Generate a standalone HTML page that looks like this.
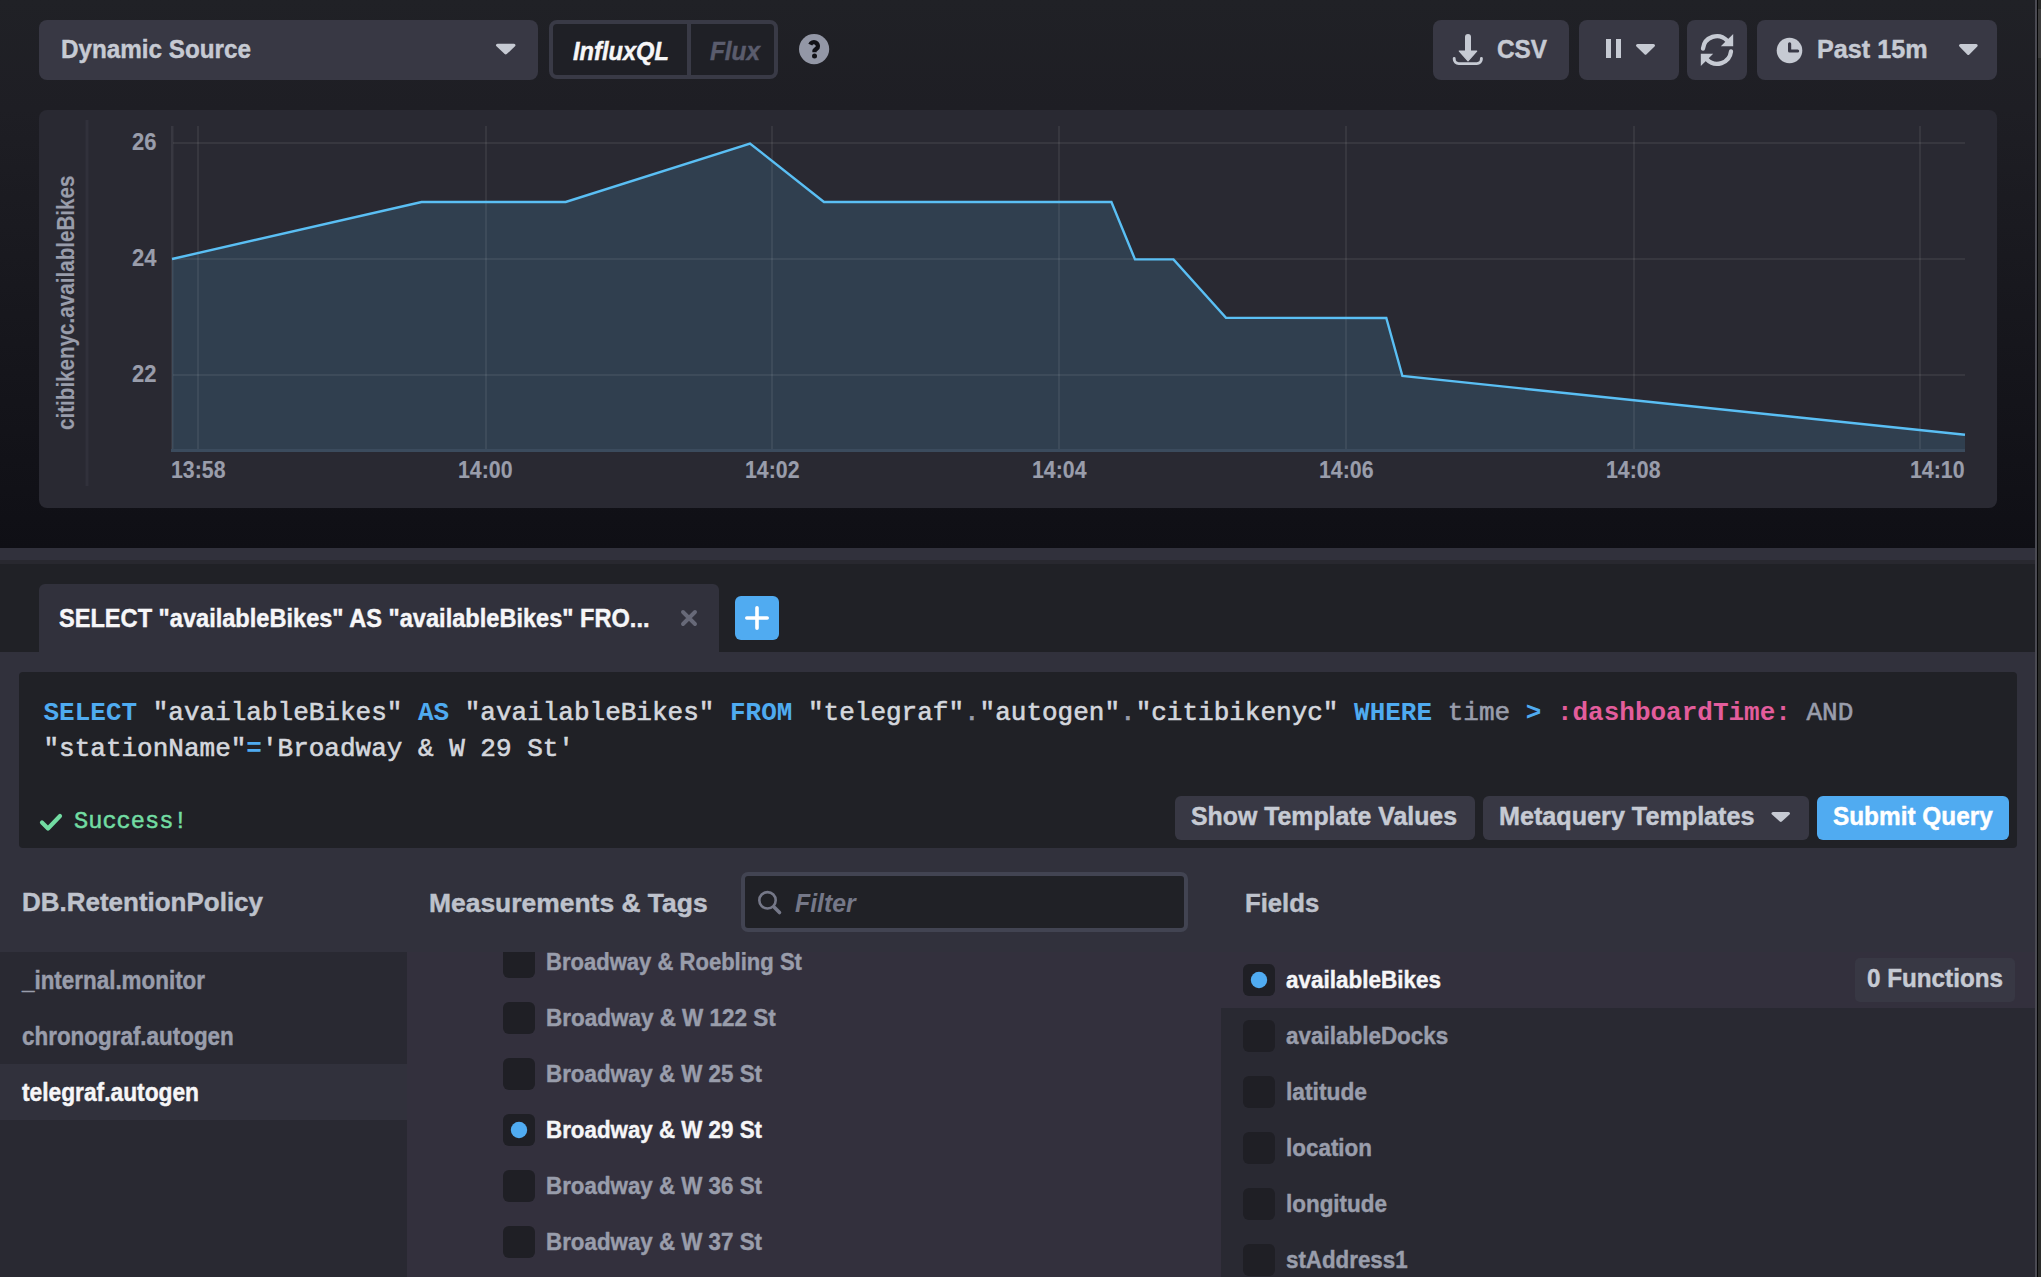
<!DOCTYPE html>
<html><head><meta charset="utf-8"><title>Chronograf Data Explorer</title>
<style>
html,body{margin:0;padding:0;width:2041px;height:1277px;overflow:hidden;background:#202126;}
.b{position:absolute;}
.t{position:absolute;white-space:pre;transform-origin:0 0;}
</style></head><body>
<div class="b" style="left:0;top:0;width:2041px;height:548px;background:linear-gradient(to bottom,#202126 0%,#1e1e24 20%,#0f0f15 100%)"></div>
<div class="b" style="left:39px;top:20px;width:499px;height:60px;background:#383844;border-radius:8px;"></div>
<div class="t" style="left:60.80px;top:35.97px;font-size:26.50px;line-height:26.50px;font-family:'Liberation Sans',sans-serif;font-weight:700;font-style:normal;color:#c6cad3;transform:scaleX(0.9149);-webkit-text-stroke:0.45px #c6cad3;">Dynamic Source</div>
<svg class="b" style="left:490px;top:40px" width="30" height="20" viewBox="0 0 30 20"><path d="M7.5 5.2 L24 5.2 L15.7 13 Z" fill="#c6cad3" stroke="#c6cad3" stroke-width="3" stroke-linejoin="round"/></svg>
<div class="b" style="left:549px;top:20px;width:229px;height:59px;background:#1f2026;border-radius:8px;box-sizing:border-box;border:4px solid #393a46;"></div>
<div class="b" style="left:687px;top:24px;width:4px;height:51px;background:#393a46;"></div>
<div class="t" style="left:573.00px;top:37.99px;font-size:26.00px;line-height:26.00px;font-family:'Liberation Sans',sans-serif;font-weight:700;font-style:italic;color:#f6f6f8;transform:scaleX(0.9105);-webkit-text-stroke:0.45px #f6f6f8;">InfluxQL</div>
<div class="t" style="left:710.00px;top:37.99px;font-size:26.00px;line-height:26.00px;font-family:'Liberation Sans',sans-serif;font-weight:700;font-style:italic;color:#5a5c6d;transform:scaleX(0.9355);-webkit-text-stroke:0.45px #5a5c6d;">Flux</div>
<svg class="b" style="left:797px;top:32px" width="34" height="34" viewBox="0 0 34 34"><circle cx="17.1" cy="17.1" r="15.1" fill="#9397a6"/><path d="M13.3 12.6 A3.9 3.9 0 1 1 20.6 15.6 L17.5 18.6 L17.5 20.2" fill="none" stroke="#111116" stroke-width="4.3" stroke-linejoin="round"/><circle cx="17.5" cy="24" r="2.5" fill="#111116"/></svg>
<div class="b" style="left:1433px;top:20px;width:136px;height:60px;background:#383844;border-radius:8px;"></div>
<svg class="b" style="left:1450px;top:30px" width="40" height="40" viewBox="0 0 40 40"><path d="M18 7 L18 22" stroke="#c6cad3" stroke-width="6" stroke-linecap="round"/><path d="M9.3 21 L26.7 21 L18 30.8 Z" fill="#c6cad3" stroke="#c6cad3" stroke-width="1.2" stroke-linejoin="round"/><path d="M4.2 28.5 L4.2 29.1 A4.5 4.5 0 0 0 8.7 33.6 L26.9 33.6 A4.5 4.5 0 0 0 31.4 29.1 L31.4 28.5" fill="none" stroke="#c6cad3" stroke-width="2.9" stroke-linecap="round"/></svg>
<div class="t" style="left:1497.00px;top:35.99px;font-size:26.00px;line-height:26.00px;font-family:'Liberation Sans',sans-serif;font-weight:700;font-style:normal;color:#c6cad3;transform:scaleX(0.9352);-webkit-text-stroke:0.45px #c6cad3;">CSV</div>
<div class="b" style="left:1579px;top:20px;width:100px;height:60px;background:#383844;border-radius:8px;"></div>
<div class="b" style="left:1605.5px;top:39px;width:5.5px;height:19px;background:#c6cad3;"></div>
<div class="b" style="left:1615.5px;top:39px;width:5.5px;height:19px;background:#c6cad3;"></div>
<svg class="b" style="left:1630px;top:40px" width="30" height="20" viewBox="0 0 30 20"><path d="M7.5 5.5 L23.5 5.5 L15.5 13.2 Z" fill="#c6cad3" stroke="#c6cad3" stroke-width="3" stroke-linejoin="round"/></svg>
<div class="b" style="left:1687px;top:20px;width:60px;height:60px;background:#383844;border-radius:8px;"></div>
<svg class="b" style="left:1697px;top:30px" width="40" height="40" viewBox="0 0 40 40"><path d="M6 18.5 A14 14 0 0 1 30 10.5" fill="none" stroke="#c6cad3" stroke-width="4.3" stroke-linecap="round"/><path d="M36.2 4 L36.2 16.3 L23.8 16.3 Z" fill="#c6cad3"/><path d="M34 21.5 A14 14 0 0 1 10 29.5" fill="none" stroke="#c6cad3" stroke-width="4.3" stroke-linecap="round"/><path d="M3.8 36 L3.8 23.7 L16.2 23.7 Z" fill="#c6cad3"/></svg>
<div class="b" style="left:1757px;top:20px;width:240px;height:60px;background:#383844;border-radius:8px;"></div>
<svg class="b" style="left:1774px;top:35px" width="32" height="32" viewBox="0 0 32 32"><circle cx="15.5" cy="15.5" r="12.8" fill="#c6cad3"/><path d="M15.6 8.8 L15.6 16 L23.6 16" fill="none" stroke="#383846" stroke-width="3.2" stroke-linecap="round" stroke-linejoin="round"/></svg>
<div class="t" style="left:1816.70px;top:35.99px;font-size:26.00px;line-height:26.00px;font-family:'Liberation Sans',sans-serif;font-weight:700;font-style:normal;color:#c6cad3;transform:scaleX(0.9686);-webkit-text-stroke:0.45px #c6cad3;">Past 15m</div>
<svg class="b" style="left:1952px;top:40px" width="30" height="20" viewBox="0 0 30 20"><path d="M8.5 5.5 L24.2 5.5 L16.3 13.5 Z" fill="#c6cad3" stroke="#c6cad3" stroke-width="3" stroke-linejoin="round"/></svg>
<div class="b" style="left:39px;top:110px;width:1958px;height:398px;background:#292932;border-radius:8px;"></div>
<svg class="b" style="left:0;top:0" width="2041" height="548" viewBox="0 0 2041 548"><rect x="85.5" y="120" width="3" height="366" fill="#31313b"/><polygon points="172,259 421.6,202 565.7,202 750,143.5 824,202 1111.4,202 1135,259.4 1173.5,259.4 1226,317.8 1386.3,318 1402.4,376 1965,434.8 1965,450 172,450" fill="#303f4f"/><rect x="173" y="142" width="1792" height="2" fill="rgba(255,255,255,0.065)"/><rect x="173" y="258" width="1792" height="2" fill="rgba(255,255,255,0.065)"/><rect x="173" y="374" width="1792" height="2" fill="rgba(255,255,255,0.065)"/><rect x="197" y="126" width="2" height="324" fill="rgba(255,255,255,0.065)"/><rect x="485" y="126" width="2" height="324" fill="rgba(255,255,255,0.065)"/><rect x="771" y="126" width="2" height="324" fill="rgba(255,255,255,0.065)"/><rect x="1058" y="126" width="2" height="324" fill="rgba(255,255,255,0.065)"/><rect x="1345" y="126" width="2" height="324" fill="rgba(255,255,255,0.065)"/><rect x="1633" y="126" width="2" height="324" fill="rgba(255,255,255,0.065)"/><rect x="1919" y="126" width="2" height="324" fill="rgba(255,255,255,0.065)"/><rect x="171" y="126" width="2.5" height="324" fill="rgba(255,255,255,0.075)"/><rect x="171" y="449" width="1794" height="3" fill="#3b4b5d"/><polyline points="172,259 421.6,202 565.7,202 750,143.5 824,202 1111.4,202 1135,259.4 1173.5,259.4 1226,317.8 1386.3,318 1402.4,376 1965,434.8" fill="none" stroke="#5abff4" stroke-width="2.4" stroke-linejoin="miter"/></svg>
<div class="t" style="left:132.00px;top:130.86px;font-size:23.20px;line-height:23.20px;font-family:'Liberation Sans',sans-serif;font-weight:700;font-style:normal;color:#999dab;transform:scaleX(0.9494);-webkit-text-stroke:0.15px #999dab;">26</div>
<div class="t" style="left:132.00px;top:246.86px;font-size:23.20px;line-height:23.20px;font-family:'Liberation Sans',sans-serif;font-weight:700;font-style:normal;color:#999dab;transform:scaleX(0.9494);-webkit-text-stroke:0.15px #999dab;">24</div>
<div class="t" style="left:132.00px;top:362.86px;font-size:23.20px;line-height:23.20px;font-family:'Liberation Sans',sans-serif;font-weight:700;font-style:normal;color:#999dab;transform:scaleX(0.9494);-webkit-text-stroke:0.15px #999dab;">22</div>
<div class="t" style="left:170.75px;top:458.83px;font-size:23.00px;line-height:23.00px;font-family:'Liberation Sans',sans-serif;font-weight:700;font-style:normal;color:#999dab;transform:scaleX(0.9264);-webkit-text-stroke:0.15px #999dab;">13:58</div>
<div class="t" style="left:457.75px;top:458.83px;font-size:23.00px;line-height:23.00px;font-family:'Liberation Sans',sans-serif;font-weight:700;font-style:normal;color:#999dab;transform:scaleX(0.9264);-webkit-text-stroke:0.15px #999dab;">14:00</div>
<div class="t" style="left:744.75px;top:458.83px;font-size:23.00px;line-height:23.00px;font-family:'Liberation Sans',sans-serif;font-weight:700;font-style:normal;color:#999dab;transform:scaleX(0.9264);-webkit-text-stroke:0.15px #999dab;">14:02</div>
<div class="t" style="left:1031.75px;top:458.83px;font-size:23.00px;line-height:23.00px;font-family:'Liberation Sans',sans-serif;font-weight:700;font-style:normal;color:#999dab;transform:scaleX(0.9264);-webkit-text-stroke:0.15px #999dab;">14:04</div>
<div class="t" style="left:1318.75px;top:458.83px;font-size:23.00px;line-height:23.00px;font-family:'Liberation Sans',sans-serif;font-weight:700;font-style:normal;color:#999dab;transform:scaleX(0.9264);-webkit-text-stroke:0.15px #999dab;">14:06</div>
<div class="t" style="left:1605.75px;top:458.83px;font-size:23.00px;line-height:23.00px;font-family:'Liberation Sans',sans-serif;font-weight:700;font-style:normal;color:#999dab;transform:scaleX(0.9264);-webkit-text-stroke:0.15px #999dab;">14:08</div>
<div class="t" style="left:1910.00px;top:458.83px;font-size:23.00px;line-height:23.00px;font-family:'Liberation Sans',sans-serif;font-weight:700;font-style:normal;color:#999dab;transform:scaleX(0.9264);-webkit-text-stroke:0.15px #999dab;">14:10</div>
<div class="b" style="left:75.2px;top:430px;width:0;height:0;transform:rotate(-90deg);transform-origin:0 0"><div class="t" style="left:0.00px;top:-19.64px;font-size:23.20px;line-height:23.20px;font-family:'Liberation Sans',sans-serif;font-weight:700;font-style:normal;color:#999dab;transform:scaleX(0.8893);-webkit-text-stroke:0.15px #999dab;">citibikenyc.availableBikes</div></div>
<div class="b" style="left:0px;top:548px;width:2041px;height:12px;background:#31313c;"></div>
<div class="b" style="left:0px;top:560px;width:2041px;height:4px;background:#28282f;"></div>
<div class="b" style="left:0px;top:564px;width:2041px;height:713px;background:#202126;"></div>
<div class="b" style="left:39px;top:584px;width:680px;height:80px;background:#31313c;border-radius:6px 6px 0 0;"></div>
<div class="t" style="left:59.40px;top:606.16px;font-size:25.80px;line-height:25.80px;font-family:'Liberation Sans',sans-serif;font-weight:700;font-style:normal;color:#f6f6f8;transform:scaleX(0.9143);-webkit-text-stroke:0.45px #f6f6f8;">SELECT &quot;availableBikes&quot; AS &quot;availableBikes&quot; FRO...</div>
<svg class="b" style="left:676px;top:605px" width="26" height="26" viewBox="0 0 26 26"><path d="M7 7 L19 19 M19 7 L7 19" stroke="#676978" stroke-width="3.9" stroke-linecap="round"/></svg>
<div class="b" style="left:735px;top:596px;width:44px;height:44px;background:#50abf1;border-radius:6px;"></div>
<svg class="b" style="left:735px;top:596px" width="44" height="44" viewBox="0 0 44 44"><path d="M22 11.8 L22 32.2 M11.8 22 L32.2 22" stroke="#ffffff" stroke-width="3.6" stroke-linecap="round"/></svg>
<div class="b" style="left:0px;top:652px;width:2035px;height:625px;background:#31313c;"></div>
<div class="b" style="left:19px;top:672px;width:1998px;height:176px;background:#202126;border-radius:4px;"></div>
<div class="t" style="left:43.50px;top:700.07px;font-size:26.00px;line-height:26.00px;font-family:'Liberation Mono',monospace;font-weight:700;font-style:normal;color:#4fabf0;">SELECT</div><div class="t" style="left:137.11px;top:700.07px;font-size:26.00px;line-height:26.00px;font-family:'Liberation Mono',monospace;font-weight:400;font-style:normal;color:#d4d7dd;-webkit-text-stroke:0.6px #d4d7dd;"> &quot;availableBikes&quot; </div><div class="t" style="left:417.95px;top:700.07px;font-size:26.00px;line-height:26.00px;font-family:'Liberation Mono',monospace;font-weight:700;font-style:normal;color:#4fabf0;">AS</div><div class="t" style="left:449.15px;top:700.07px;font-size:26.00px;line-height:26.00px;font-family:'Liberation Mono',monospace;font-weight:400;font-style:normal;color:#d4d7dd;-webkit-text-stroke:0.6px #d4d7dd;"> &quot;availableBikes&quot; </div><div class="t" style="left:729.99px;top:700.07px;font-size:26.00px;line-height:26.00px;font-family:'Liberation Mono',monospace;font-weight:700;font-style:normal;color:#4fabf0;">FROM</div><div class="t" style="left:792.40px;top:700.07px;font-size:26.00px;line-height:26.00px;font-family:'Liberation Mono',monospace;font-weight:400;font-style:normal;color:#d4d7dd;-webkit-text-stroke:0.6px #d4d7dd;"> &quot;telegraf&quot;</div><div class="t" style="left:964.02px;top:700.07px;font-size:26.00px;line-height:26.00px;font-family:'Liberation Mono',monospace;font-weight:400;font-style:normal;color:#999dab;-webkit-text-stroke:0.6px #999dab;">.</div><div class="t" style="left:979.62px;top:700.07px;font-size:26.00px;line-height:26.00px;font-family:'Liberation Mono',monospace;font-weight:400;font-style:normal;color:#d4d7dd;-webkit-text-stroke:0.6px #d4d7dd;">&quot;autogen&quot;</div><div class="t" style="left:1120.04px;top:700.07px;font-size:26.00px;line-height:26.00px;font-family:'Liberation Mono',monospace;font-weight:400;font-style:normal;color:#999dab;-webkit-text-stroke:0.6px #999dab;">.</div><div class="t" style="left:1135.64px;top:700.07px;font-size:26.00px;line-height:26.00px;font-family:'Liberation Mono',monospace;font-weight:400;font-style:normal;color:#d4d7dd;-webkit-text-stroke:0.6px #d4d7dd;">&quot;citibikenyc&quot; </div><div class="t" style="left:1354.07px;top:700.07px;font-size:26.00px;line-height:26.00px;font-family:'Liberation Mono',monospace;font-weight:700;font-style:normal;color:#4fabf0;">WHERE</div><div class="t" style="left:1432.08px;top:700.07px;font-size:26.00px;line-height:26.00px;font-family:'Liberation Mono',monospace;font-weight:400;font-style:normal;color:#d4d7dd;-webkit-text-stroke:0.6px #d4d7dd;"> </div><div class="t" style="left:1447.68px;top:700.07px;font-size:26.00px;line-height:26.00px;font-family:'Liberation Mono',monospace;font-weight:400;font-style:normal;color:#999dab;-webkit-text-stroke:0.6px #999dab;">time</div><div class="t" style="left:1510.09px;top:700.07px;font-size:26.00px;line-height:26.00px;font-family:'Liberation Mono',monospace;font-weight:400;font-style:normal;color:#d4d7dd;-webkit-text-stroke:0.6px #d4d7dd;"> </div><div class="t" style="left:1525.69px;top:700.07px;font-size:26.00px;line-height:26.00px;font-family:'Liberation Mono',monospace;font-weight:700;font-style:normal;color:#4fabf0;">&gt;</div><div class="t" style="left:1541.29px;top:700.07px;font-size:26.00px;line-height:26.00px;font-family:'Liberation Mono',monospace;font-weight:400;font-style:normal;color:#d4d7dd;-webkit-text-stroke:0.6px #d4d7dd;"> </div><div class="t" style="left:1556.90px;top:700.07px;font-size:26.00px;line-height:26.00px;font-family:'Liberation Mono',monospace;font-weight:700;font-style:normal;color:#e35d9c;">:dashboardTime:</div><div class="t" style="left:1790.93px;top:700.07px;font-size:26.00px;line-height:26.00px;font-family:'Liberation Mono',monospace;font-weight:400;font-style:normal;color:#d4d7dd;-webkit-text-stroke:0.6px #d4d7dd;"> </div><div class="t" style="left:1806.53px;top:700.07px;font-size:26.00px;line-height:26.00px;font-family:'Liberation Mono',monospace;font-weight:400;font-style:normal;color:#999dab;-webkit-text-stroke:0.6px #999dab;">AND</div>
<div class="t" style="left:43.50px;top:736.07px;font-size:26.00px;line-height:26.00px;font-family:'Liberation Mono',monospace;font-weight:400;font-style:normal;color:#d4d7dd;-webkit-text-stroke:0.6px #d4d7dd;">&quot;stationName&quot;</div><div class="t" style="left:246.33px;top:736.07px;font-size:26.00px;line-height:26.00px;font-family:'Liberation Mono',monospace;font-weight:700;font-style:normal;color:#4fabf0;">=</div><div class="t" style="left:261.93px;top:736.07px;font-size:26.00px;line-height:26.00px;font-family:'Liberation Mono',monospace;font-weight:400;font-style:normal;color:#d4d7dd;-webkit-text-stroke:0.6px #d4d7dd;">&#x27;Broadway &amp; W 29 St&#x27;</div>
<svg class="b" style="left:36px;top:808px" width="30" height="26" viewBox="0 0 30 26"><path d="M6 14.5 L12 20.5 L24 8" fill="none" stroke="#72dca2" stroke-width="4.2" stroke-linecap="round" stroke-linejoin="round"/></svg>
<div class="t" style="left:74.40px;top:809.69px;font-size:23.50px;line-height:23.50px;font-family:'Liberation Mono',monospace;font-weight:400;font-style:normal;color:#72dca2;transform:scaleX(1.0061);-webkit-text-stroke:0.5px #72dca2;">Success!</div>
<div class="b" style="left:1175px;top:796px;width:300px;height:44px;background:#383844;border-radius:6px;"></div>
<div class="t" style="left:1191.30px;top:804.21px;font-size:25.50px;line-height:25.50px;font-family:'Liberation Sans',sans-serif;font-weight:700;font-style:normal;color:#c6cad3;transform:scaleX(0.9742);-webkit-text-stroke:0.45px #c6cad3;">Show Template Values</div>
<div class="b" style="left:1483px;top:796px;width:326px;height:44px;background:#383844;border-radius:6px;"></div>
<div class="t" style="left:1499.00px;top:804.21px;font-size:25.50px;line-height:25.50px;font-family:'Liberation Sans',sans-serif;font-weight:700;font-style:normal;color:#c6cad3;transform:scaleX(0.9870);-webkit-text-stroke:0.45px #c6cad3;">Metaquery Templates</div>
<svg class="b" style="left:1766px;top:806px" width="30" height="20" viewBox="0 0 30 20"><path d="M7 7.5 L22.5 7.5 L14.8 14.5 Z" fill="#c6cad3" stroke="#c6cad3" stroke-width="3" stroke-linejoin="round"/></svg>
<div class="b" style="left:1817px;top:796px;width:192px;height:44px;background:#50abf1;border-radius:6px;"></div>
<div class="t" style="left:1833.00px;top:804.21px;font-size:25.50px;line-height:25.50px;font-family:'Liberation Sans',sans-serif;font-weight:700;font-style:normal;color:#ffffff;transform:scaleX(0.9552);-webkit-text-stroke:0.45px #ffffff;">Submit Query</div>
<div class="t" style="left:21.80px;top:889.37px;font-size:26.50px;line-height:26.50px;font-family:'Liberation Sans',sans-serif;font-weight:700;font-style:normal;color:#bec2cc;transform:scaleX(0.9801);-webkit-text-stroke:0.45px #bec2cc;">DB.RetentionPolicy</div>
<div class="t" style="left:429.40px;top:890.07px;font-size:26.50px;line-height:26.50px;font-family:'Liberation Sans',sans-serif;font-weight:700;font-style:normal;color:#bec2cc;transform:scaleX(0.9974);-webkit-text-stroke:0.45px #bec2cc;">Measurements &amp; Tags</div>
<div class="t" style="left:1244.60px;top:889.77px;font-size:26.50px;line-height:26.50px;font-family:'Liberation Sans',sans-serif;font-weight:700;font-style:normal;color:#bec2cc;transform:scaleX(0.9690);-webkit-text-stroke:0.45px #bec2cc;">Fields</div>
<div class="b" style="left:741px;top:872px;width:447px;height:60px;background:#202126;border-radius:7px;box-sizing:border-box;border:4px solid #424452;"></div>
<svg class="b" style="left:752px;top:885px" width="36" height="36" viewBox="0 0 36 36"><circle cx="15.5" cy="15.3" r="8.2" fill="none" stroke="#757888" stroke-width="2.6"/><path d="M22 22 L27.5 27.5" stroke="#757888" stroke-width="3.6" stroke-linecap="round"/></svg>
<div class="t" style="left:795.40px;top:889.57px;font-size:26.50px;line-height:26.50px;font-family:'Liberation Sans',sans-serif;font-weight:700;font-style:italic;color:#757888;transform:scaleX(0.9354);-webkit-text-stroke:0px;">Filter</div>
<div class="b" style="left:0px;top:952px;width:407px;height:325px;background:#292932;"></div>
<div class="b" style="left:0px;top:1064px;width:407px;height:56px;background:#31313c;"></div>
<div class="t" style="left:21.80px;top:967.61px;font-size:25.50px;line-height:25.50px;font-family:'Liberation Sans',sans-serif;font-weight:700;font-style:normal;color:#999dab;transform:scaleX(0.8787);-webkit-text-stroke:0.45px #999dab;">_internal.monitor</div>
<div class="t" style="left:21.80px;top:1023.61px;font-size:25.50px;line-height:25.50px;font-family:'Liberation Sans',sans-serif;font-weight:700;font-style:normal;color:#999dab;transform:scaleX(0.8794);-webkit-text-stroke:0.45px #999dab;">chronograf.autogen</div>
<div class="t" style="left:21.80px;top:1079.61px;font-size:25.50px;line-height:25.50px;font-family:'Liberation Sans',sans-serif;font-weight:700;font-style:normal;color:#f6f6f8;transform:scaleX(0.8923);-webkit-text-stroke:0.45px #f6f6f8;">telegraf.autogen</div>
<div class="b" style="left:407px;top:952px;width:814px;height:325px;overflow:hidden;background:#33303d">
<div class="b" style="left:96px;top:-6px;width:32px;height:32px;background:#1f1f25;border-radius:6px;"></div>
<div class="t" style="left:138.50px;top:-1.99px;font-size:24.80px;line-height:24.80px;font-family:'Liberation Sans',sans-serif;font-weight:700;font-style:normal;color:#999dab;transform:scaleX(0.8889);-webkit-text-stroke:0.45px #999dab;">Broadway &amp; Roebling St</div>
<div class="b" style="left:96px;top:50px;width:32px;height:32px;background:#1f1f25;border-radius:6px;"></div>
<div class="t" style="left:138.50px;top:54.01px;font-size:24.80px;line-height:24.80px;font-family:'Liberation Sans',sans-serif;font-weight:700;font-style:normal;color:#999dab;transform:scaleX(0.9062);-webkit-text-stroke:0.45px #999dab;">Broadway &amp; W 122 St</div>
<div class="b" style="left:96px;top:106px;width:32px;height:32px;background:#1f1f25;border-radius:6px;"></div>
<div class="t" style="left:138.50px;top:110.01px;font-size:24.80px;line-height:24.80px;font-family:'Liberation Sans',sans-serif;font-weight:700;font-style:normal;color:#999dab;transform:scaleX(0.9008);-webkit-text-stroke:0.45px #999dab;">Broadway &amp; W 25 St</div>
<div class="b" style="left:96px;top:162px;width:32px;height:32px;background:#1f1f25;border-radius:6px;"></div>
<svg class="b" style="left:96px;top:162px" width="32" height="32" viewBox="0 0 32 32"><circle cx="16" cy="16" r="8.2" fill="#50abf1"/></svg>
<div class="t" style="left:138.50px;top:166.01px;font-size:24.80px;line-height:24.80px;font-family:'Liberation Sans',sans-serif;font-weight:700;font-style:normal;color:#f6f6f8;transform:scaleX(0.9008);-webkit-text-stroke:0.45px #f6f6f8;">Broadway &amp; W 29 St</div>
<div class="b" style="left:96px;top:218px;width:32px;height:32px;background:#1f1f25;border-radius:6px;"></div>
<div class="t" style="left:138.50px;top:222.01px;font-size:24.80px;line-height:24.80px;font-family:'Liberation Sans',sans-serif;font-weight:700;font-style:normal;color:#999dab;transform:scaleX(0.9008);-webkit-text-stroke:0.45px #999dab;">Broadway &amp; W 36 St</div>
<div class="b" style="left:96px;top:274px;width:32px;height:32px;background:#1f1f25;border-radius:6px;"></div>
<div class="t" style="left:138.50px;top:278.01px;font-size:24.80px;line-height:24.80px;font-family:'Liberation Sans',sans-serif;font-weight:700;font-style:normal;color:#999dab;transform:scaleX(0.9008);-webkit-text-stroke:0.45px #999dab;">Broadway &amp; W 37 St</div>
</div>
<div class="b" style="left:1221px;top:952px;width:814px;height:56px;background:#33303d;"></div>
<div class="b" style="left:1221px;top:1008px;width:814px;height:269px;background:#292932;"></div>
<div class="b" style="left:1243px;top:964px;width:32px;height:32px;background:#1f1f25;border-radius:6px;"></div>
<svg class="b" style="left:1243px;top:964px" width="32" height="32" viewBox="0 0 32 32"><circle cx="16" cy="16" r="8.2" fill="#50abf1"/></svg>
<div class="t" style="left:1286.30px;top:968.01px;font-size:24.80px;line-height:24.80px;font-family:'Liberation Sans',sans-serif;font-weight:700;font-style:normal;color:#f6f6f8;transform:scaleX(0.9066);-webkit-text-stroke:0.45px #f6f6f8;">availableBikes</div>
<div class="b" style="left:1243px;top:1020px;width:32px;height:32px;background:#1f1f25;border-radius:6px;"></div>
<div class="t" style="left:1286.30px;top:1024.01px;font-size:24.80px;line-height:24.80px;font-family:'Liberation Sans',sans-serif;font-weight:700;font-style:normal;color:#999dab;transform:scaleX(0.9056);-webkit-text-stroke:0.45px #999dab;">availableDocks</div>
<div class="b" style="left:1243px;top:1076px;width:32px;height:32px;background:#1f1f25;border-radius:6px;"></div>
<div class="t" style="left:1286.30px;top:1080.01px;font-size:24.80px;line-height:24.80px;font-family:'Liberation Sans',sans-serif;font-weight:700;font-style:normal;color:#999dab;transform:scaleX(0.9185);-webkit-text-stroke:0.45px #999dab;">latitude</div>
<div class="b" style="left:1243px;top:1132px;width:32px;height:32px;background:#1f1f25;border-radius:6px;"></div>
<div class="t" style="left:1286.30px;top:1136.01px;font-size:24.80px;line-height:24.80px;font-family:'Liberation Sans',sans-serif;font-weight:700;font-style:normal;color:#999dab;transform:scaleX(0.9046);-webkit-text-stroke:0.45px #999dab;">location</div>
<div class="b" style="left:1243px;top:1188px;width:32px;height:32px;background:#1f1f25;border-radius:6px;"></div>
<div class="t" style="left:1286.30px;top:1192.01px;font-size:24.80px;line-height:24.80px;font-family:'Liberation Sans',sans-serif;font-weight:700;font-style:normal;color:#999dab;transform:scaleX(0.9052);-webkit-text-stroke:0.45px #999dab;">longitude</div>
<div class="b" style="left:1243px;top:1244px;width:32px;height:32px;background:#1f1f25;border-radius:6px;"></div>
<div class="t" style="left:1286.30px;top:1248.01px;font-size:24.80px;line-height:24.80px;font-family:'Liberation Sans',sans-serif;font-weight:700;font-style:normal;color:#999dab;transform:scaleX(0.9002);-webkit-text-stroke:0.45px #999dab;">stAddress1</div>
<div class="b" style="left:1855px;top:958px;width:160px;height:44px;background:#383844;border-radius:5px;"></div>
<div class="t" style="left:1866.60px;top:966.01px;font-size:25.50px;line-height:25.50px;font-family:'Liberation Sans',sans-serif;font-weight:700;font-style:normal;color:#c6cad3;transform:scaleX(0.9504);-webkit-text-stroke:0.45px #c6cad3;">0 Functions</div>
<div class="b" style="left:2034.5px;top:0px;width:2px;height:1277px;background:#4a4a52;"></div>
<div class="b" style="left:2036.5px;top:0px;width:1.5px;height:1277px;background:#050506;"></div>
<div class="b" style="left:2038px;top:0px;width:3px;height:1277px;background:#2a2b2a;"></div>
<div class="b" style="left:2038px;top:9px;width:3px;height:49px;background:#3c3c3c;"></div>
</body></html>
